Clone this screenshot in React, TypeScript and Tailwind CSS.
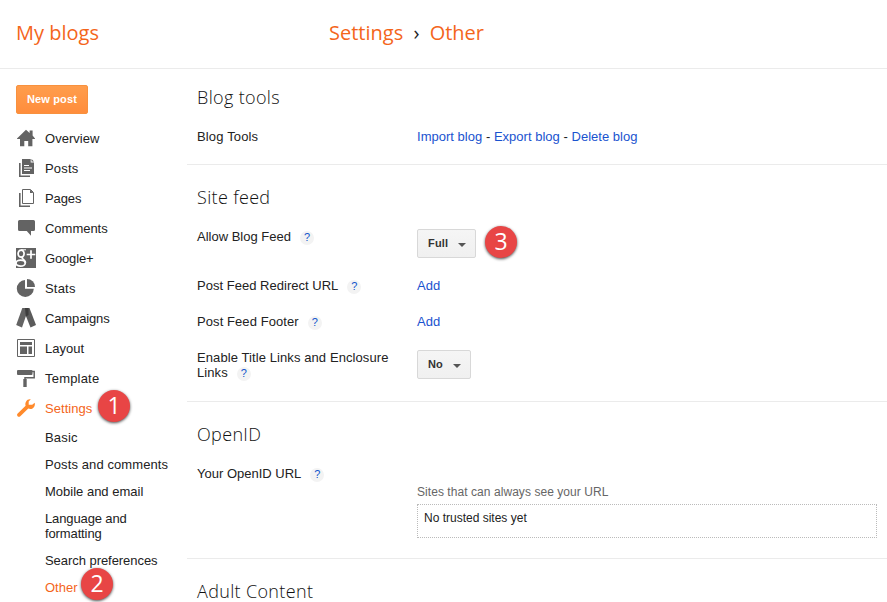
import type { ReactNode } from "react";

const sans = "font-['Liberation_Sans',Arial,sans-serif]";
const open = "font-['Open_Sans',sans-serif]";

function Icon({ children }: { children: ReactNode }) {
  return (
    <svg viewBox="0 0 20 20" className="-mt-0.5 size-5 shrink-0" fill="#636363">
      {children}
    </svg>
  );
}

const nav: { label: string; tracking: string; icon: ReactNode }[] = [
  {
    label: "Overview",
    tracking: "tracking-[0.03px]",
    icon: <path d="M10 1.8 13.600 5V2.500h3V7.600L19 10.500V11h-2.600v7.200h-4.200v-5.200H8.300v5.200H4V11H1v-.5z" />,
  },
  {
    label: "Posts",
    tracking: "tracking-[0.2px]",
    icon: (
      <>
        <path d="M3 5h1.600v12.400H14V19H3z" />
        <path d="M6 1h8.700v3.600H18V16H6z" />
        <path d="M15.500 1 18 3.600h-2.500z" />
        <path d="M8 7.500h5M8 10h8M8 12.500h6" stroke="#fff" strokeWidth="1" />
      </>
    ),
  },
  {
    label: "Pages",
    tracking: "tracking-[-0.1px]",
    icon: (
      <>
        <path d="M3 5h1.600v12.400H14V19H3z" />
        <path d="M6.500 1.500h8l3 3v11h-11z" fill="#fff" stroke="#636363" />
        <path d="M14 1.500v3.500h3.500z" />
      </>
    ),
  },
  {
    label: "Comments",
    tracking: "tracking-[-0.02px]",
    icon: <path d="M3.500 2h14Q19 2 19 3.500v8q0 1.500-1.500 1.500H15v4.800L10.800 13H3.500Q2 13 2 11.500v-8Q2 2 3.500 2z" />,
  },
  {
    label: "Google+",
    tracking: "tracking-[-0.15px]",
    icon: (
      <>
        <path d="M0 0h20v20H0z" />
        <g fill="none" stroke="#fff">
          <ellipse cx="5.100" cy="5.600" rx="3" ry="3.500" strokeWidth="1.700" />
          <path d="M5 1.800h5" strokeWidth="1" />
          <path d="M7 8.500C4 10.500 9.500 11.500 9.500 14.800" strokeWidth="1.700" />
          <ellipse cx="4.600" cy="15.200" rx="4.600" ry="3" strokeWidth="1.700" />
          <path d="M15 2.200v8.600M10.700 6.500h8.600" strokeWidth="1.700" />
        </g>
      </>
    ),
  },
  {
    label: "Stats",
    tracking: "tracking-[0.2px]",
    icon: (
      <>
        <path d="M9 2v8.700h8.800A8.500 8.500 0 1 1 9 2z" />
        <path d="M11 1a8 8 0 0 1 8 8h-8z" />
      </>
    ),
  },
  {
    label: "Campaigns",
    tracking: "tracking-[-0.13px]",
    icon: (
      <>
        <path d="M6.300 0h6.400L6 19.500.200 17z" />
        <path d="M9 0h4.500L20 17l-5.500 2.500-5.600-14z" fill="#5b5b5b" />
        <path d="M9 0h3.500v7L10 8.500z" fill="#3d3d3d" />
      </>
    ),
  },
  {
    label: "Layout",
    tracking: "tracking-[0.03px]",
    icon: (
      <>
        <path d="M1.500 1.500h17v17h-17z" fill="#fff" stroke="#636363" />
        <path d="M4 4h12v3H4zM4 8.500h7v7.500H4zM12.500 8.500H16V16h-3.500z" />
      </>
    ),
  },
  {
    label: "Template",
    tracking: "tracking-[0.2px]",
    icon: (
      <>
        <rect x="1" y="2" width="15.500" height="5" rx="1" />
        <path d="M16 3.500h2.200v6.200H9v2" fill="none" stroke="#636363" strokeWidth="1.500" />
        <path d="M7.300 11h3.400v8H7.300z" />
      </>
    ),
  },
  {
    label: "Settings",
    tracking: "tracking-[0.05px]",
    icon: (
      <path
        fill="#ff8a2c"
        d="M14.800 1.300 12.700 3.500v3.300h3.500L18.700 4.700c.8 3-1 6.300-4.300 6.300-.8 0-1.500-.1-2.100-.4L4.300 18.200c-.8.8-2 .7-2.700 0s-.7-1.900.1-2.600l7.900-7.800C8.600 4.400 11 .5 14.800 1.300z"
      />
    ),
  },
];

const sub = [
  { label: "Basic", style: "tracking-[0.2px]" },
  { label: "Posts and comments", style: "tracking-[0.1px]" },
  { label: "Mobile and email", style: "tracking-[0px]" },
  { label: "Language and formatting", style: "w-[110px] tracking-[-0.12px]" },
  { label: "Search preferences", style: "tracking-[-0.05px]" },
];

function Badge({ n, place }: { n: number; place: string }) {
  return (
    <span
      className={`absolute flex size-8 items-center justify-center rounded-full bg-[#e84545] pb-px font-['Open_Sans',sans-serif] text-[23px] leading-none tracking-normal text-white shadow-[0_1px_3px_rgba(0,0,0,0.7)] ${place}`}
    >
      {n}
    </span>
  );
}

function Help() {
  return (
    <span className="mt-[3px] ml-[9px] flex size-[14px] items-center justify-center rounded-full bg-[#f3f3f3] pb-[2px] text-[11px] leading-3 tracking-normal text-[#1155cc]">
      ?
    </span>
  );
}

function Title({ children }: { children: ReactNode }) {
  return <h2 className={`h-6 text-lg leading-6 font-light tracking-[0.34px] text-[#111] ${open}`}>{children}</h2>;
}

function Row({ lines, help, children, className }: { lines: string[]; help?: boolean; children?: ReactNode; className: string }) {
  return (
    <div className={`flex items-start ${className}`}>
      <div className="w-[220px] shrink-0 leading-[15px]">
        {lines.map((line, i) => (
          <div key={line} className="flex h-[15px] items-center whitespace-nowrap">
            {line}
            {help && i === lines.length - 1 && <Help />}
          </div>
        ))}
      </div>
      {children}
    </div>
  );
}

function Select({ value, className }: { value: string; className: string }) {
  return (
    <button
      className={`flex h-[29px] items-center justify-between rounded-[2px] border border-[#d8d8d8] bg-linear-to-b from-[#f5f5f5] to-[#f0f0f0] pr-[9px] pl-[10px] text-[11px] font-bold text-[#333] ${className}`}
    >
      {value}
      <span className="mt-[3px] border-x-4 border-t-4 border-x-transparent border-t-[#555]" />
    </button>
  );
}

const link = "text-[#1a53cf]";

export default function App() {
  return (
    <div className={`flex h-[602px] w-[887px] flex-col overflow-hidden bg-white text-[13px] text-[#222] ${sans}`}>
      <header className={`flex h-[69px] shrink-0 items-start border-b border-[#ebebeb] pt-[19px] pl-4 text-[20px] leading-[28px] text-[#f4651b] ${open}`}>
        <span className="w-[313px]">My blogs</span>
        <span>Settings</span>
        <span className="w-[26.500px] text-center text-[#222]">›</span>
        <span>Other</span>
      </header>
      <div className="flex min-h-0 flex-1">
        <nav className="w-[187px] shrink-0 pt-4 pl-4">
          <button className="mb-[10px] block h-[29px] w-[72px] rounded-[2px] border border-[#f8913e] bg-linear-to-b from-[#ff9d4c] to-[#ff8d3c] text-[11px] font-bold tracking-[0.15px] text-white">
            New post
          </button>
          {nav.map(({ label, tracking, icon }) => (
            <div key={label} className={`relative flex h-[30px] items-center gap-[9px] ${label === "Settings" ? "text-[#f4651b]" : ""}`}>
              <Icon>{icon}</Icon>
              <span className={tracking}>{label}</span>
              {label === "Settings" && <Badge n={1} place="left-[82px] top-[-4px]" />}
            </div>
          ))}
          <div className="flex flex-col gap-3 pt-[6px] pl-[29px] leading-[15px]">
            {sub.map((s) => (
              <span key={s.label} className={s.style}>
                {s.label}
              </span>
            ))}
            <span className="relative text-[#f4651b]">
              Other
              <Badge n={2} place="left-[36px] top-[-12px]" />
            </span>
          </div>
        </nav>
        <main className="min-w-0 flex-1">
          <section className="h-24 border-b border-[#ebebeb] pt-4 pl-[10px]">
            <Title>Blog tools</Title>
            <Row lines={["Blog Tools"]} className="pt-5 tracking-[0.15px]">
              <div className="leading-[15px] tracking-[0.02px]">
                <a className={link}>Import blog</a> - <a className={link}>Export blog</a> - <a className={link}>Delete blog</a>
              </div>
            </Row>
          </section>
          <section className="h-[237px] border-b border-[#ebebeb] pt-5 pl-[10px]">
            <Title>Site feed</Title>
            <Row lines={["Allow Blog Feed"]} help className="h-[69px] pt-5">
              <div className="relative tracking-[0.2px]">
                <Select value="Full" className="w-[59px]" />
                <Badge n={3} place="left-[68px] top-[-3px]" />
              </div>
            </Row>
            <Row lines={["Post Feed Redirect URL"]} help className="h-9 tracking-[0.02px]">
              <a className={`leading-[15px] ${link}`}>Add</a>
            </Row>
            <Row lines={["Post Feed Footer"]} help className="h-9 tracking-[0.08px]">
              <a className={`leading-[15px] ${link}`}>Add</a>
            </Row>
            <Row lines={["Enable Title Links and Enclosure", "Links"]} help className="tracking-[0.09px]">
              <Select value="No" className="w-[54px]" />
            </Row>
          </section>
          <section className="h-[157px] border-b border-[#ebebeb] pt-5 pl-[10px]">
            <Title>OpenID</Title>
            <Row lines={["Your OpenID URL"]} help className="pt-5">
              <div className="w-[460px] pt-[19px] text-xs leading-[15px]">
                <div className="tracking-[0.06px] text-[#666]">Sites that can always see your URL</div>
                <div className="mt-1 h-[34px] border border-dotted border-[#bbb] pt-[6px] pl-[6px]">No trusted sites yet</div>
              </div>
            </Row>
          </section>
          <section className="pt-5 pl-[10px]">
            <Title>Adult Content</Title>
          </section>
        </main>
      </div>
    </div>
  );
}
